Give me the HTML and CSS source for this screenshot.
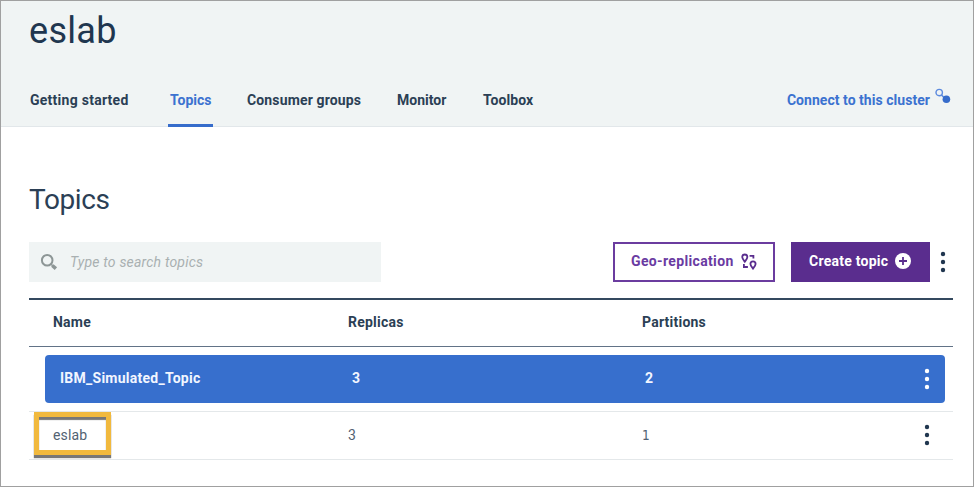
FILE: index.html
```
<!DOCTYPE html>
<html lang="en">
<head>
<meta charset="utf-8">
<title>eslab</title>
<link rel="stylesheet" href="styles.css">
</head>
<body>
<div class="app">
  <header class="header">
    <h1 class="cluster">eslab</h1>
    <nav class="tabs">
      <a class="tab tab-start"><span>Getting started</span></a>
      <a class="tab tab-topics active"><span>Topics</span></a>
      <a class="tab tab-groups"><span>Consumer groups</span></a>
      <a class="tab tab-monitor"><span>Monitor</span></a>
      <a class="tab tab-toolbox"><span>Toolbox</span></a>
      <a class="connect"><span>Connect to this cluster</span>
        <svg width="16" height="16" viewBox="0 0 16 16"><circle cx="4.200" cy="4.600" r="3.200" fill="none" stroke="#5c8ade" stroke-width="1.400"/><path d="M6.500 6.900 9 9.500" stroke="#5c8ade" stroke-width="1.500"/><circle cx="11.400" cy="11.300" r="3.800" fill="#366ccb"/></svg>
      </a>
    </nav>
  </header>
  <main class="content">
    <h2 class="heading">Topics</h2>
    <div class="toolbar">
      <div class="search">
        <svg width="18" height="18" viewBox="0 0 18 18" fill="none" stroke="#8d9696"><circle cx="7.200" cy="7.200" r="5.300" stroke-width="2"/><path d="m11.200 11.200 1.500 1.500" stroke-width="1.600"/><path d="m12.300 12.500 3.600 3.100" stroke-width="3.600"/></svg>
        <span class="placeholder">Type to search topics</span>
      </div>
      <button class="btn geo"><span>Geo-replication</span>
        <svg width="16" height="17" viewBox="0 0 16 17" fill="none" stroke="#5a2d8e" stroke-width="1.800"><path d="M3.800 8.800C2.200 6.800 1.200 5.600 1.200 4.100a2.600 2.600 0 0 1 5.200 0c0 1.500-1 2.700-2.600 4.700Z"/><path d="M12 15.600c-1.600-2-2.600-3.200-2.600-4.700a2.600 2.600 0 0 1 5.200 0c0 1.500-1 2.700-2.600 4.700Z"/><path d="M8.600 2.800h3.800v2.800M2.900 11v3h4"/></svg>
      </button>
      <button class="btn create"><span>Create topic</span>
        <svg width="16" height="16" viewBox="0 0 16 16"><circle cx="8" cy="8" r="8" fill="#fff"/><path d="M8 4v8M4 8h8" stroke="#5a2d8e" stroke-width="1.800"/></svg>
      </button>
      <svg class="more" width="6" height="22" viewBox="0 0 6 22"><circle cx="3" cy="3" r="2.200"/><circle cx="3" cy="11" r="2.200"/><circle cx="3" cy="19" r="2.200"/></svg>
    </div>
    <div class="table">
      <div class="row head"><span>Name</span><span>Replicas</span><span>Partitions</span></div>
      <div class="slot">
        <div class="row selected"><span class="topic">IBM_Simulated_Topic</span><span>3</span><span>2</span>
          <svg class="more" width="6" height="22" viewBox="0 0 6 22"><circle cx="3" cy="3" r="2.200"/><circle cx="3" cy="11" r="2.200"/><circle cx="3" cy="19" r="2.200"/></svg>
        </div>
      </div>
      <div class="row plain"><span class="marked">eslab<i class="marker"></i></span><span>3</span><span class="one">1</span>
        <svg class="more" width="6" height="22" viewBox="0 0 6 22"><circle cx="3" cy="3" r="2.200"/><circle cx="3" cy="11" r="2.200"/><circle cx="3" cy="19" r="2.200"/></svg>
      </div>
    </div>
  </main>
</div>
</body>
</html>
```
FILE: styles.css
```
* { box-sizing: border-box; }
body { margin: 0; font-family: Roboto, "Liberation Sans", sans-serif; font-size: 14px; color: #2b3f55; }
svg { display: block; flex: none; }
.app { width: 974px; height: 487px; border: 1px solid #a0a0a0; background: #fff; overflow: hidden; }
.header { height: 126px; padding: 0 22px 0 29px; background: #f0f4f4; border-bottom: 1px solid #e2e7ea; display: flex; flex-direction: column; justify-content: space-between; }
.cluster { margin: 8px 0 0 -1px; font-size: 36px; line-height: 44px; font-weight: 400; color: #20364f; letter-spacing: .3px; }
.tabs { display: flex; height: 53px; margin-bottom: -1px; line-height: 20px; font-weight: 700; }
.tab { padding-top: 16px; white-space: nowrap; }
.tab-start { width: 138px; letter-spacing: .26px; }
.tab-topics { width: 45px; padding-left: 2px; margin-right: 34px; }
.tab-groups { width: 150px; letter-spacing: .15px; }
.tab-monitor { width: 86px; }
.tab-toolbox { width: 60px; letter-spacing: .08px; }
.active { color: #3b72d0; border-bottom: 3px solid #366ccb; }
.connect { display: flex; gap: 5px; margin-left: auto; padding-top: 16px; color: #3b72d0; white-space: nowrap; letter-spacing: .04px; }
.connect svg { margin-top: -2px; }
.content { padding: 56px 20px 0 28px; }
.heading { margin: 0 0 25px; font-size: 28px; line-height: 34px; font-weight: 400; letter-spacing: -.4px; color: #2b3f55; }
.toolbar { display: flex; align-items: center; height: 40px; }
.search { display: flex; align-items: center; width: 352px; height: 40px; padding-left: 11px; gap: 12px; background: #f0f4f4; }
.placeholder { font-style: italic; color: #a9b0b1; letter-spacing: .2px; margin-bottom: 1px; }
.btn { display: flex; align-items: center; height: 40px; padding: 0 0 2px; border: 0; font: 700 14px Roboto, sans-serif; white-space: nowrap; }
.geo { width: 162px; margin-left: auto; padding-left: 16px; gap: 7px; background: #fff; border: 2px solid #6b3c9f; color: #6a3ba2; letter-spacing: .35px; }
.create { width: 139px; margin-left: 16px; padding-left: 18px; gap: 7px; background: #5a2d8e; color: #fff; letter-spacing: .25px; }
.more { fill: #20364f; }
.toolbar .more { margin: 0 7px 0 10px; }
.table { margin-top: 16px; border-top: 2px solid #34495f; }
.row { display: grid; grid-template-columns: 295px 294px 1fr 6px; align-items: center; }
.head { height: 47px; padding: 0 0 2px 24px; border-bottom: 1px solid #627387; font-weight: 700; letter-spacing: .23px; }
.slot { height: 65px; padding: 8px 8px 9px 16px; border-bottom: 1px solid #e4e8ea; }
.selected { height: 48px; padding: 0 15px; grid-template-columns: 292px 293px 1fr 6px; background: #376fcd; border-radius: 4px; color: #f2f6ff; font-weight: 700; }
.selected span { margin-bottom: 2px; }
.topic { letter-spacing: .25px; }
.selected .more { fill: #fff; }
.plain { height: 48px; padding: 0 23px 2px 24px; border-bottom: 1px solid #e4e8ea; color: #526272; }
.marked { position: relative; letter-spacing: .15px; }
.marker { position: absolute; left: -19px; top: -15px; width: 77px; height: 43px; border: 5px solid #f1b93e; box-shadow: 0 3px 1px #555c, inset 0 3px 1px #555c; }
.one { font-family: "DejaVu Sans Condensed", "DejaVu Sans", sans-serif; font-size: 13.500px; }
```
